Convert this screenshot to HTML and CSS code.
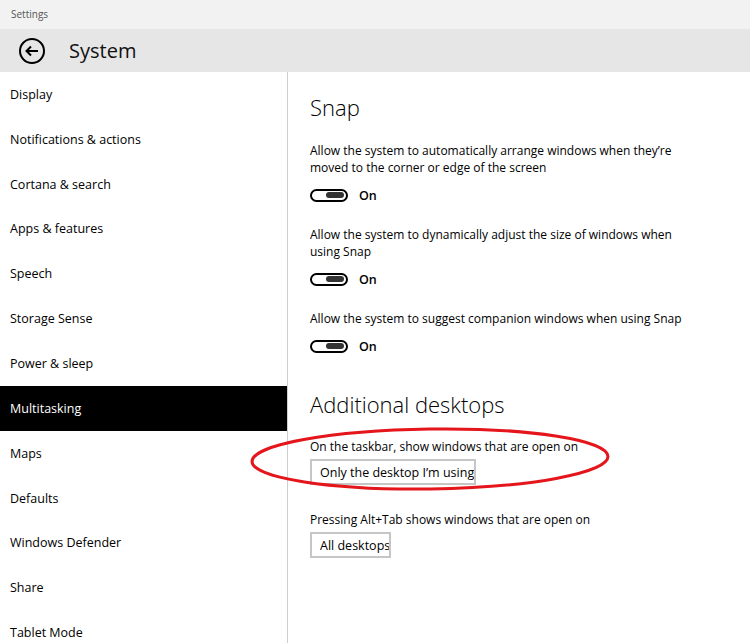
FILE: index.html
```html
<!DOCTYPE html>
<html>
<head>
<meta charset="utf-8">
<link rel="stylesheet" href="styles.css">
</head>
<body>
<div class="titlebar">Settings</div>
<div class="header">
  <svg class="back" width="28" height="28" viewBox="0 0 28 28">
    <circle cx="14" cy="14" r="12" fill="none" stroke="#000" stroke-width="2"/>
    <path d="M20 14H8.5M13 9.5L8.5 14L13 18.5" fill="none" stroke="#000" stroke-width="2"/>
  </svg>
  <span class="htitle">System</span>
</div>
<div class="main">
  <nav class="sidebar">
    <div class="item">Display</div>
    <div class="item">Notifications &amp; actions</div>
    <div class="item">Cortana &amp; search</div>
    <div class="item">Apps &amp; features</div>
    <div class="item">Speech</div>
    <div class="item">Storage Sense</div>
    <div class="item">Power &amp; sleep</div>
    <div class="item active">Multitasking</div>
    <div class="item">Maps</div>
    <div class="item">Defaults</div>
    <div class="item">Windows Defender</div>
    <div class="item">Share</div>
    <div class="item">Tablet Mode</div>
  </nav>
  <section class="content">
    <h2 class="h-snap">Snap</h2>
    <p class="desc">Allow the system to automatically arrange windows when they’re<br>moved to the corner or edge of the screen</p>
    <div class="toggle"><span class="track"><span class="knob"></span></span><span class="on">On</span></div>
    <p class="desc">Allow the system to dynamically adjust the size of windows when<br>using Snap</p>
    <div class="toggle"><span class="track"><span class="knob"></span></span><span class="on">On</span></div>
    <p class="desc">Allow the system to suggest companion windows when using Snap</p>
    <div class="toggle"><span class="track"><span class="knob"></span></span><span class="on">On</span></div>
    <h2 class="h-add">Additional desktops</h2>
    <p class="desc2">On the taskbar, show windows that are open on</p>
    <div class="select wide">Only the desktop I’m using</div>
    <p class="desc3">Pressing Alt+Tab shows windows that are open on</p>
    <div class="select narrow">All desktops</div>
  </section>
</div>
<svg class="ellipse" width="750" height="643" viewBox="0 0 750 643">
  <ellipse cx="430" cy="459" rx="178" ry="30" transform="rotate(-0.8 430 459)" fill="none" stroke="#e4151b" stroke-width="3"/>
</svg>
</body>
</html>
```
FILE: styles.css
```css
* { box-sizing: border-box; }
html, body { margin: 0; padding: 0; }
body {
  width: 750px;
  height: 643px;
  overflow: hidden;
  background: #fff;
  font-family: "Open Sans", "Noto Sans", sans-serif;
  color: #000;
  position: relative;
}
.titlebar {
  height: 29px;
  background: #f2f2f2;
  font-size: 10px;
  color: #555;
  padding: 7px 0 0 11px;
}
.header {
  height: 43px;
  background: #e6e6e6;
  display: flex;
  align-items: center;
  padding-left: 18px;
}
.back { display: block; }
.htitle {
  font-size: 20px;
  margin-left: 23px;
  font-weight: 400;
  color: #111;
}
.main {
  display: flex;
  height: 571px;
}
.sidebar {
  width: 288px;
  border-right: 1px solid #cfcfcf;
  flex-shrink: 0;
}
.item {
  height: 44.85px;
  display: flex;
  align-items: center;
  padding-left: 10px;
  font-size: 12.5px;
}
.item.active { background: #000; color: #fff; }
.content {
  padding-left: 22px;
  padding-top: 20px;
}
h2 {
  margin: 0;
  font-weight: 300;
  font-size: 22px;
  line-height: 30px;
}
.desc, .desc2, .desc3 {
  margin: 0;
  font-size: 12px;
  line-height: 17px;
}
.h-snap { margin-bottom: 20px; }
.toggle {
  display: flex;
  align-items: center;
  height: 20px;
  margin: 9px 0 21px;
}
.track {
  width: 38px;
  height: 13px;
  border: 2px solid #000;
  border-radius: 7px;
  display: flex;
  justify-content: flex-end;
  align-items: center;
  padding-right: 2px;
}
.knob {
  width: 18px;
  height: 6px;
  border-radius: 3px;
  background: #333;
}
.on {
  margin-left: 11px;
  font-size: 12.5px;
  font-weight: 600;
}
.h-add { margin-top: 33px; margin-bottom: 19px; }
.select {
  height: 26px;
  border: 2px solid #c6c6c6;
  font-size: 12.5px;
  padding-left: 8px;
  display: flex;
  align-items: center;
  white-space: nowrap;
  overflow: hidden;
  margin-top: 4px;
}
.wide { width: 166px; }
.narrow { width: 81px; }
.desc3 { margin-top: 26px; }
.ellipse {
  position: absolute;
  left: 0;
  top: 0;
  pointer-events: none;
}
```
